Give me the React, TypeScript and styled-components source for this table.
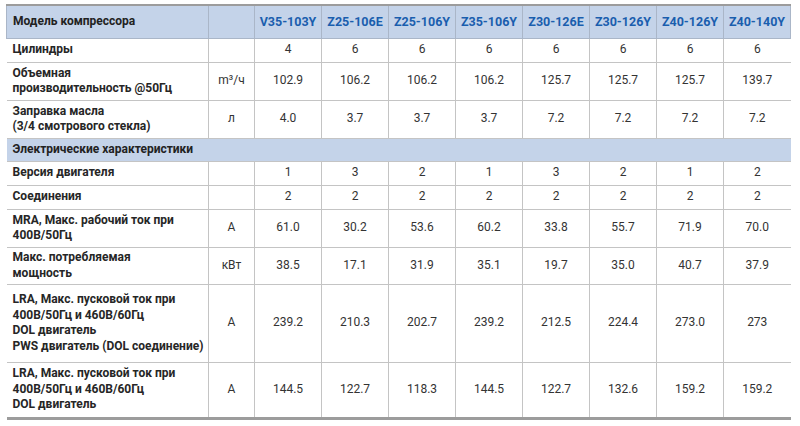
import styled, { createGlobalStyle } from "styled-components";

const GlobalStyle = createGlobalStyle`
  body {
    margin: 0;
    background: #ffffff;
    font-family: Roboto, "Liberation Sans", sans-serif;
  }
`;

type Row = {
  label: string[];
  unit: string;
  values: string[];
  height: number;
};

const models = [
  "V35-103Y",
  "Z25-106E",
  "Z25-106Y",
  "Z35-106Y",
  "Z30-126E",
  "Z30-126Y",
  "Z40-126Y",
  "Z40-140Y",
];

const general: Row[] = [
  { label: ["Цилиндры"], unit: "", values: ["4", "6", "6", "6", "6", "6", "6", "6"], height: 24 },
  {
    label: ["Объемная", "производительность @50Гц"],
    unit: "m³/ч",
    values: ["102.9", "106.2", "106.2", "106.2", "125.7", "125.7", "125.7", "139.7"],
    height: 38,
  },
  {
    label: ["Заправка масла", "(3/4 смотрового стекла)"],
    unit: "л",
    values: ["4.0", "3.7", "3.7", "3.7", "7.2", "7.2", "7.2", "7.2"],
    height: 38,
  },
];

const electric: Row[] = [
  { label: ["Версия двигателя"], unit: "", values: ["1", "3", "2", "1", "3", "2", "1", "2"], height: 24 },
  { label: ["Соединения"], unit: "", values: ["2", "2", "2", "2", "2", "2", "2", "2"], height: 24 },
  {
    label: ["MRA, Макс. рабочий ток при", "400В/50Гц"],
    unit: "A",
    values: ["61.0", "30.2", "53.6", "60.2", "33.8", "55.7", "71.9", "70.0"],
    height: 38,
  },
  {
    label: ["Макс. потребляемая", "мощность"],
    unit: "кВт",
    values: ["38.5", "17.1", "31.9", "35.1", "19.7", "35.0", "40.7", "37.9"],
    height: 37,
  },
  {
    label: [
      "LRA, Макс. пусковой ток при",
      "400В/50Гц и 460В/60Гц",
      "DOL двигатель",
      "PWS двигатель (DOL соединение)",
    ],
    unit: "A",
    values: ["239.2", "210.3", "202.7", "239.2", "212.5", "224.4", "273.0", "273"],
    height: 78,
  },
  {
    label: ["LRA, Макс. пусковой ток при", "400В/50Гц и 460В/60Гц", "DOL двигатель"],
    unit: "A",
    values: ["144.5", "122.7", "118.3", "144.5", "122.7", "132.6", "159.2", "159.2"],
    height: 56,
  },
];

function BodyRow({ row }: { row: Row }) {
  return (
    <TableRow $height={row.height}>
      <LabelCell>
        {row.label.map((line) => (
          <div key={line}>{line}</div>
        ))}
      </LabelCell>
      <ValueCell>{row.unit}</ValueCell>
      {row.values.map((value, index) => (
        <ValueCell key={index}>{value}</ValueCell>
      ))}
    </TableRow>
  );
}

export default function App() {
  return (
    <>
      <GlobalStyle />
      <Page>
        <SpecTable>
          <colgroup>
            <col style={{ width: 202 }} />
            <col style={{ width: 46 }} />
            {models.map((model) => (
              <col key={model} style={{ width: 67 }} />
            ))}
          </colgroup>
          <thead>
            <HeaderRow $height={33}>
              <HeaderLabel>Модель компрессора</HeaderLabel>
              <HeaderLabel />
              {models.map((model) => (
                <ModelCell key={model}>{model}</ModelCell>
              ))}
            </HeaderRow>
          </thead>
          <tbody>
            {general.map((row) => (
              <BodyRow key={row.label.join()} row={row} />
            ))}
            <HeaderRow $height={23}>
              <SectionCell colSpan={10}>Электрические характеристики</SectionCell>
            </HeaderRow>
            {electric.map((row, index) => (
              <BodyRow key={index} row={row} />
            ))}
          </tbody>
        </SpecTable>
      </Page>
    </>
  );
}

const Page = styled.div`
  padding: 4px 9px 0 6px;
`;

const SpecTable = styled.table`
  width: 785px;
  table-layout: fixed;
  border-collapse: collapse;
  border-top: 2px solid #9c9c9c;
  border-bottom: 3px solid #9c9c9c;
  font-size: 12px;
  line-height: 15.5px;
  color: #2b2b2b;
`;

const TableRow = styled.tr<{ $height: number }>`
  height: ${(props) => props.$height}px;
`;

const HeaderRow = styled(TableRow)`
  background: #c4d3e9;
`;

const Cell = styled.td`
  border: 1px solid #c4c4c4;
  padding: 0 6px;
  vertical-align: middle;
`;

const HeaderLabel = styled(Cell)`
  border-color: #aab6c8;
  border-top: none;
  font-weight: 700;
  color: #222222;
  text-align: left;
`;

const ModelCell = styled(Cell)`
  border-color: #aab6c8;
  border-top: none;
  font-size: 12.5px;
  font-weight: 700;
  color: #1a5eae;
  text-align: center;
  padding: 0;
  white-space: nowrap;
`;

const SectionCell = styled(Cell)`
  font-weight: 700;
  color: #222222;
  border-left: none;
  border-right: none;
`;

const LabelCell = styled(Cell)`
  font-weight: 700;
  color: #262626;
  border-left: none;
  white-space: nowrap;
`;

const ValueCell = styled(Cell)`
  text-align: center;
  color: #333333;
  padding: 0;

  &:last-child {
    border-right: none;
  }
`;
